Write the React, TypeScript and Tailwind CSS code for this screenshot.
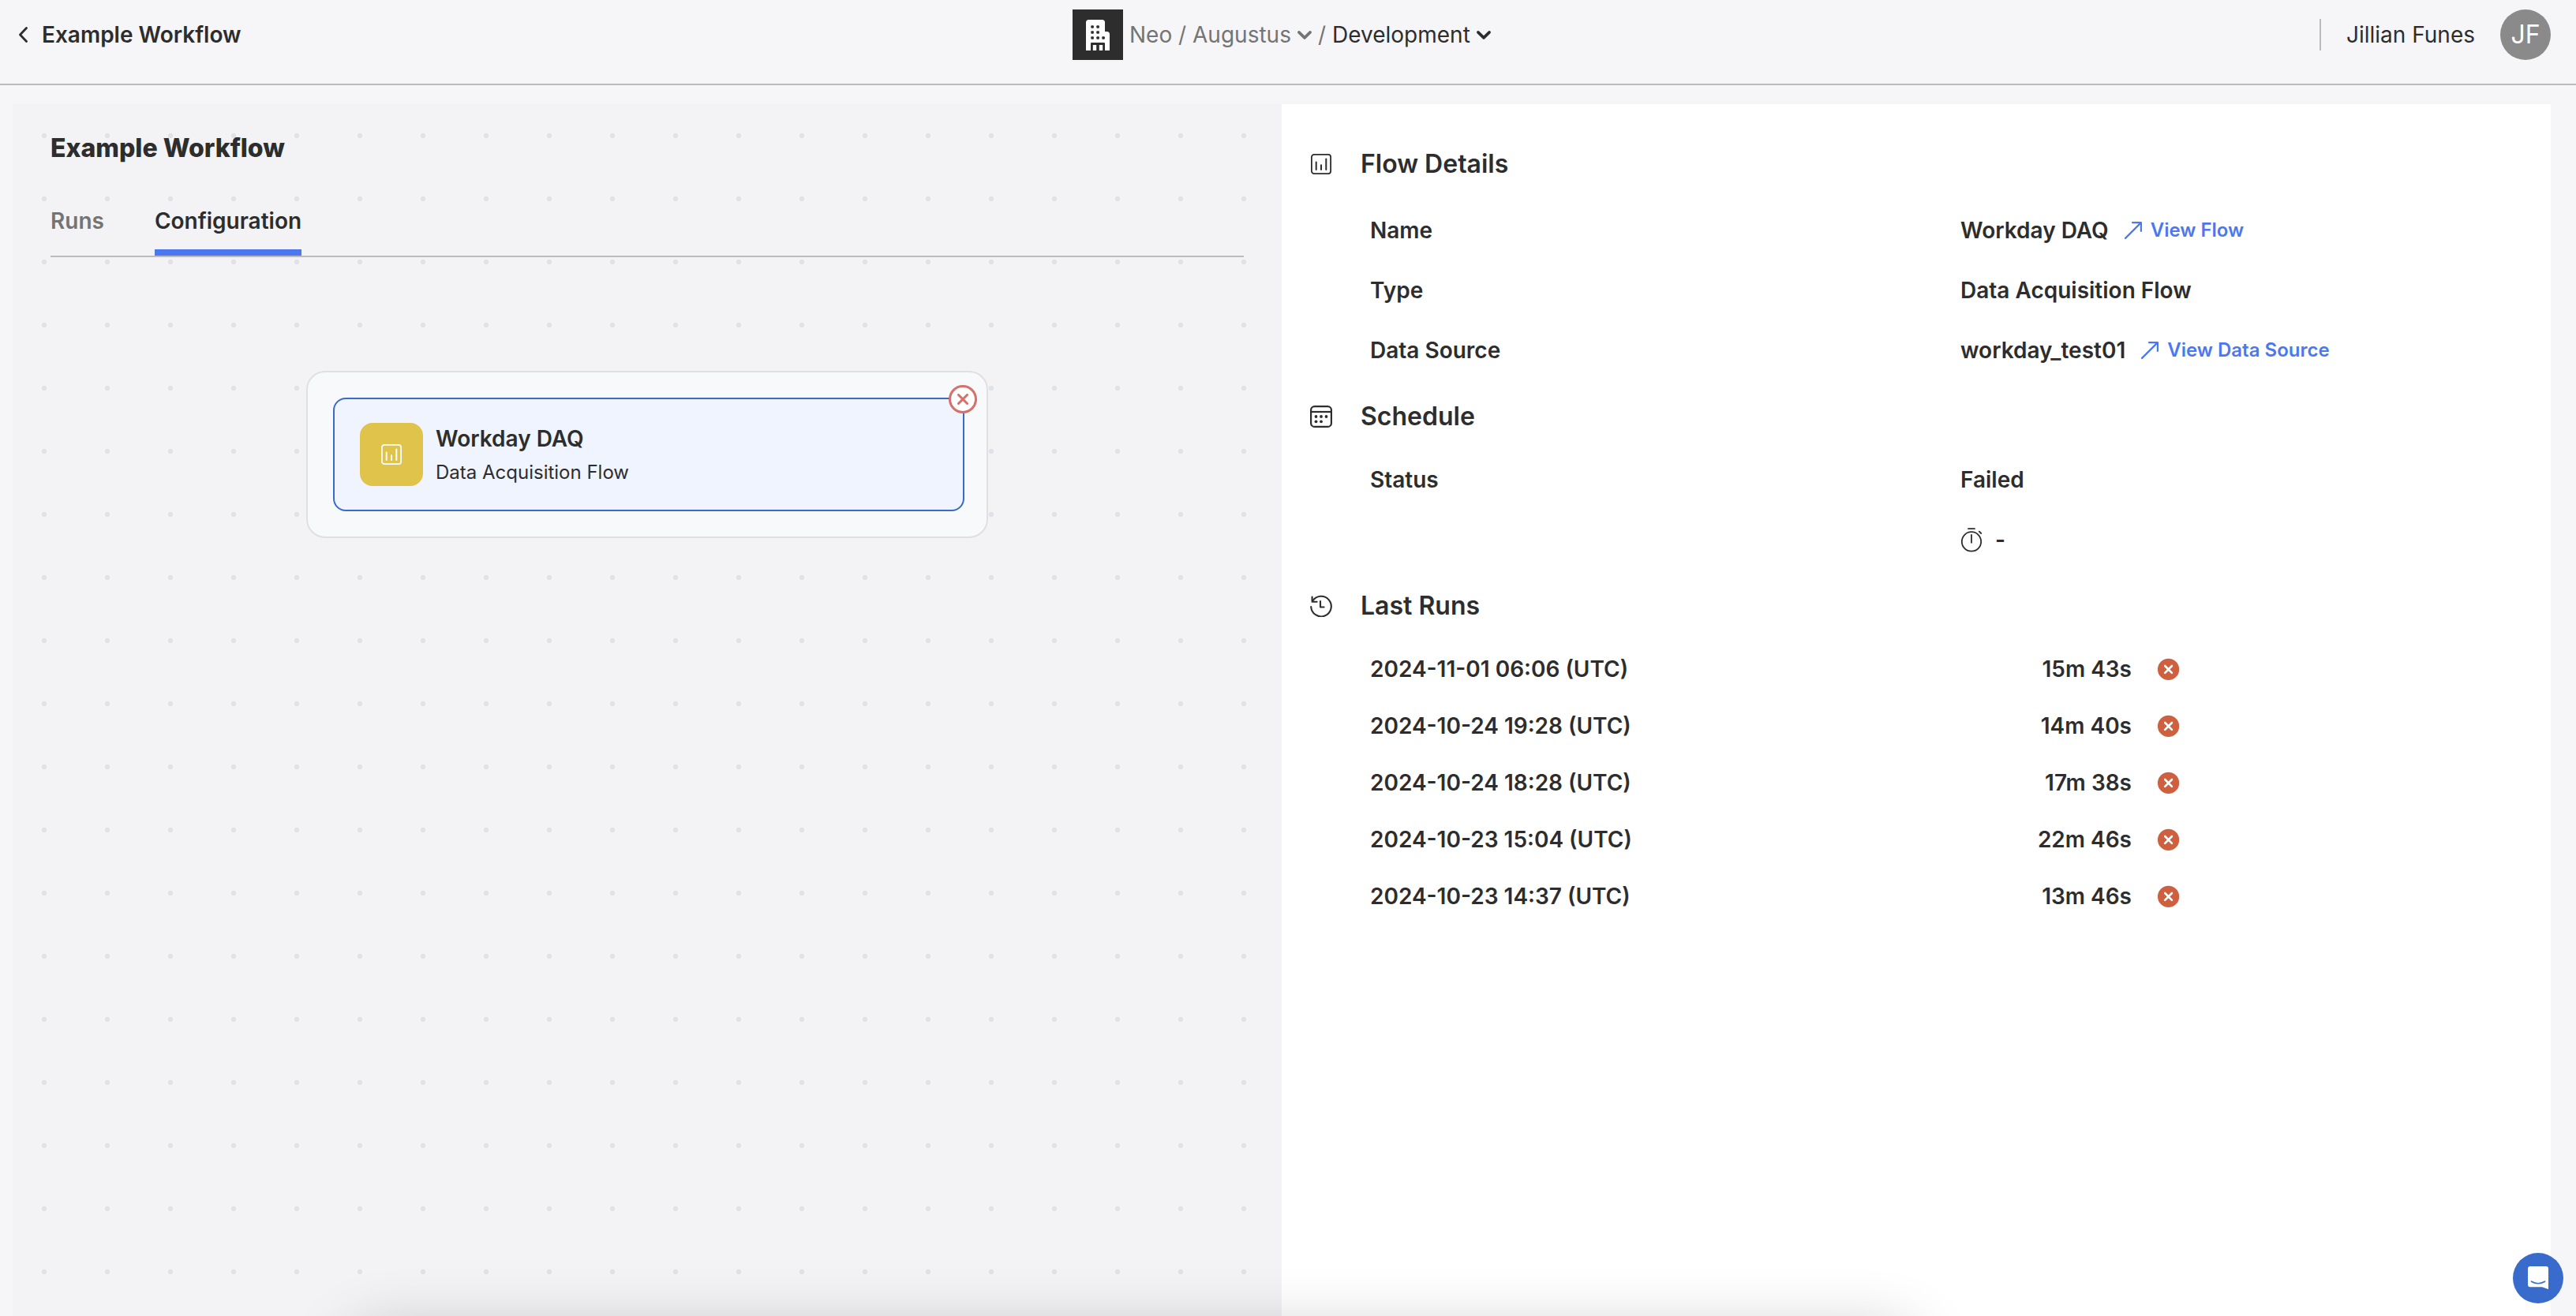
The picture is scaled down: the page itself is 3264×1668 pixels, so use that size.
import type { ReactNode } from "react";

type Run = { startedAt: string; duration: string };

const runs: Run[] = [
  { startedAt: "2024-11-01 06:06 (UTC)", duration: "15m 43s" },
  { startedAt: "2024-10-24 19:28 (UTC)", duration: "14m 40s" },
  { startedAt: "2024-10-24 18:28 (UTC)", duration: "17m 38s" },
  { startedAt: "2024-10-23 15:04 (UTC)", duration: "22m 46s" },
  { startedAt: "2024-10-23 14:37 (UTC)", duration: "13m 46s" },
];

const FlowIcon = ({ className }: { className?: string }) => (
  <svg
    viewBox="0 0 26 26"
    className={className}
    fill="none"
    stroke="currentColor"
    strokeLinecap="round"
  >
    <rect x="0.9" y="0.9" width="24.2" height="24.2" rx="3.2" strokeWidth="1.8" />
    <path d="M6.7 10.5v9.5M13 14.2V20M19.3 6.5V20" strokeWidth="2" />
  </svg>
);

const CalendarIcon = () => (
  <svg viewBox="0 0 28 28" className="size-7" fill="none" stroke="currentColor" strokeWidth="2.2">
    <rect x="1.1" y="1.1" width="25.8" height="25.8" rx="4.5" />
    <path d="M1 8h26" />
    <g fill="currentColor" stroke="none">
      <circle cx="7.5" cy="14" r="1.9" />
      <circle cx="14" cy="14" r="1.9" />
      <circle cx="20.5" cy="14" r="1.9" />
      <circle cx="7.5" cy="20.3" r="1.9" />
      <circle cx="14" cy="20.3" r="1.9" />
    </g>
  </svg>
);

const HistoryIcon = () => (
  <svg
    viewBox="0 0 28 28"
    className="size-7"
    fill="none"
    stroke="currentColor"
    strokeWidth="2.1"
    strokeLinecap="round"
    strokeLinejoin="round"
  >
    <path d="M1.2 15A12.8 12.8 0 1 0 3 8" />
    <path d="M2.6 2.5v6.3h6" />
    <path d="M13 8v7.5h4.6" />
  </svg>
);

const TimerIcon = () => (
  <svg
    viewBox="0 0 28 32"
    className="h-8 w-7"
    fill="none"
    stroke="currentColor"
    strokeWidth="1.8"
    strokeLinecap="round"
  >
    <circle cx="14" cy="18.4" r="12.2" />
    <path d="M10 2.2h8M14 9.8v10M23.8 5.6l2.4 2.4" />
  </svg>
);

const BuildingIcon = () => (
  <svg viewBox="0 0 30 39" className="h-[39px] w-[30px]">
    <path d="M0 39V3.5Q0 0 3.5 0h17Q24 0 24 3.5V15h2.5q3.5 0 3.5 3.5V39z" fill="#fff" />
    <g fill="#2d2d2d">
      <rect x="6.3" y="7.2" width="3.6" height="3.6" rx="1" />
      <rect x="13.3" y="7.2" width="3.6" height="3.6" rx="1" />
      <rect x="6.3" y="14.2" width="3.6" height="3.6" rx="1" />
      <rect x="13.3" y="14.2" width="3.6" height="3.6" rx="1" />
      <rect x="6.3" y="21.2" width="3.6" height="3.6" rx="1" />
      <rect x="13.3" y="21.2" width="3.6" height="3.6" rx="1" />
      <rect x="20.3" y="21.2" width="3.6" height="3.6" rx="1" />
      <path d="M6 39V30q0-1 1-1h16q1 0 1 1v9h-2.8v-7h-4.4v7h-3.6v-7H8.8v7z" />
    </g>
  </svg>
);

const ChevronDown = () => (
  <svg
    viewBox="0 0 18 11"
    className="h-[11px] w-[18px]"
    fill="none"
    stroke="currentColor"
    strokeWidth="3.6"
    strokeLinecap="round"
    strokeLinejoin="round"
  >
    <path d="M1.9 1.9 9 8.9l7.1-7" />
  </svg>
);

const ExternalLink = ({ children }: { children: ReactNode }) => (
  <a className="flex items-center text-2xl font-semibold text-[#4b78f1]">
    <svg
      viewBox="0 0 22 22"
      className="mr-[11px] size-[22px]"
      fill="none"
      stroke="currentColor"
      strokeWidth="2.2"
      strokeLinecap="round"
      strokeLinejoin="round"
    >
      <path d="M1.1 20.9 20.9 1.1M10 1.1h10.9V12" />
    </svg>
    {children}
  </a>
);

const SectionTitle = ({ icon, children }: { icon: ReactNode; children: ReactNode }) => (
  <div className="flex h-10 items-center">
    <div className="flex w-[100px] pl-9">{icon}</div>
    <h2 className="text-[32px] font-semibold">{children}</h2>
  </div>
);

const DetailRow = ({ label, children }: { label?: string; children: ReactNode }) => (
  <div className="grid h-[76px] grid-cols-[748px_1fr] items-center pl-28">
    <span>{label}</span>
    <div className="flex items-center">{children}</div>
  </div>
);

const Header = () => (
  <header className="h-[108px] border-b-2 border-[#bbbbbd]">
    <div className="grid h-[88px] grid-cols-[1fr_546px_1fr] items-center">
      <div className="flex items-center pl-6 font-semibold">
        <svg
          viewBox="0 0 11 20"
          className="mr-[18px] h-5 w-[11px]"
          fill="none"
          stroke="currentColor"
          strokeWidth="2.8"
          strokeLinecap="round"
          strokeLinejoin="round"
        >
          <path d="M9.5 1.5 1.5 10l8 8.5" />
        </svg>
        Example Workflow
      </div>

      <div className="flex items-center whitespace-nowrap text-[#747474]">
        <div className="mr-2 flex size-16 items-center justify-center bg-[#2d2d2d]">
          <BuildingIcon />
        </div>
        <span className="mr-2">Neo / Augustus</span>
        <ChevronDown />
        <span className="mx-2">/</span>
        <span className="mr-2 text-[#2d2d2d]">Development</span>
        <span className="text-[#2d2d2d]">
          <ChevronDown />
        </span>
      </div>

      <div className="flex items-center justify-end pr-8">
        <div className="mr-8 h-10 w-0.5 bg-[#bbbbbd]" />
        <span className="mr-8">Jillian Funes</span>
        <div className="flex size-16 items-center justify-center rounded-full bg-[#8a8a8a] text-[32px] text-white">
          JF
        </div>
      </div>
    </div>
  </header>
);

const FlowNode = () => (
  <div className="mx-auto mt-36 h-[212px] w-[864px] rounded-3xl border-2 border-[#e0e0e1] bg-[#f8f9fb] p-8">
    <div className="relative flex h-36 w-[800px] items-center rounded-2xl border-2 border-[#386bcb] bg-[#eff4fe] pl-8">
      <div className="mr-4 flex size-20 items-center justify-center rounded-2xl bg-[#dfc34a] text-white">
        <FlowIcon className="size-[26px]" />
      </div>
      <div>
        <p className="h-11 font-semibold leading-[44px]">Workday DAQ</p>
        <p className="h-10 text-2xl leading-[42px]">Data Acquisition Flow</p>
      </div>
      <div className="absolute -right-[18px] -top-[18px] flex size-9 items-center justify-center rounded-full border-3 border-[#d6706a] bg-white">
        <svg viewBox="0 0 14 14" className="size-3.5" stroke="#d6706a" strokeWidth="3" strokeLinecap="round">
          <path d="M1.5 1.5l11 11M12.5 1.5l-11 11" />
        </svg>
      </div>
    </div>
  </div>
);

const Canvas = () => (
  <section className="w-[1608px] bg-[#f3f3f5] bg-[radial-gradient(circle,#e1e2e8_3px,transparent_3px)] bg-[length:80px_80px] px-12 pt-9">
    <h1 className="h-10 text-[32px] font-extrabold leading-10">Example Workflow</h1>
    <div className="mt-9 flex gap-16 border-b-2 border-[#bbbbbd] font-semibold">
      <div className="flex h-20 items-center border-b-8 border-transparent text-[#747474]">Runs</div>
      <div className="flex h-20 items-center border-b-8 border-[#4b78f1]">Configuration</div>
    </div>
    <FlowNode />
  </section>
);

const Details = () => (
  <aside className="w-[1608px] bg-white pt-14 font-semibold">
    <SectionTitle icon={<FlowIcon className="ml-px size-[26px]" />}>Flow Details</SectionTitle>
    <div className="mb-[26px] mt-[26px]">
      <DetailRow label="Name">
        <span className="mr-5">Workday DAQ</span>
        <ExternalLink>View Flow</ExternalLink>
      </DetailRow>
      <DetailRow label="Type">Data Acquisition Flow</DetailRow>
      <DetailRow label="Data Source">
        <span className="mr-5">workday_test01</span>
        <ExternalLink>View Data Source</ExternalLink>
      </DetailRow>
    </div>

    <SectionTitle icon={<CalendarIcon />}>Schedule</SectionTitle>
    <div className="mb-[26px] mt-[22px]">
      <DetailRow label="Status">Failed</DetailRow>
      <DetailRow>
        <TimerIcon />
        <span className="ml-4">-</span>
      </DetailRow>
    </div>

    <SectionTitle icon={<HistoryIcon />}>Last Runs</SectionTitle>
    <div className="mt-6">
      {runs.map((run) => (
        <div key={run.startedAt} className="flex h-[72px] items-center pl-28">
          <span className="w-[748px]">{run.startedAt}</span>
          <span className="w-[217px] text-right">{run.duration}</span>
          <svg viewBox="0 0 28 28" className="ml-[33px] size-7">
            <circle cx="13.6" cy="14.4" r="13.6" fill="#ce6040" />
            <path d="M9.2 10l8.8 8.8M18 10l-8.8 8.8" stroke="#fff" strokeWidth="2.6" strokeLinecap="round" />
          </svg>
        </div>
      ))}
    </div>
  </aside>
);

const App = () => (
  <div className="relative flex h-[1668px] w-[3264px] flex-col overflow-hidden bg-[#f6f6f8] font-['Inter',sans-serif] text-[28px] text-[#2d2d2d]">
    <Header />
    <main className="mt-6 flex flex-1 pl-4">
      <Canvas />
      <Details />
    </main>

    {/* shadow of the drawer parked below the fold */}
    <div className="absolute -bottom-[316px] left-[440px] h-[300px] w-[1990px] rounded-[40px] shadow-[0_0_80px_rgba(0,0,0,0.2)]" />

    <button className="absolute bottom-4 right-4 flex size-16 items-center justify-center rounded-full bg-[#386bcb]">
      <svg viewBox="0 0 26 30" className="h-[30px] w-[26px]" fill="none">
        <path d="M3 0h20q3 0 3 3v26l-8-2.7H3q-3 0-3-3V3q0-3 3-3z" fill="#fff" />
        <path d="M4.5 19.2q8.5 5 17 0" stroke="#386bcb" strokeWidth="1.6" strokeLinecap="round" />
      </svg>
    </button>
  </div>
);

export default App;
